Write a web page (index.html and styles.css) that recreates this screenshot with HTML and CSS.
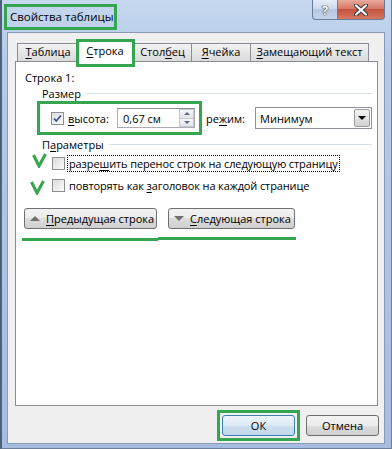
FILE: index.html
```html
<!DOCTYPE html>
<html lang="ru">
<head>
    <meta charset="UTF-8">
    <meta name="viewport" content="width=device-width, initial-scale=1.0">
    <title>Свойства таблицы</title>
    <link rel="stylesheet" href="styles.css">
</head>
<body>

<div class="window">
    <div class="titlebar">
        <span class="title">Свойства таблицы</span>
        <div class="caption-buttons">
            <div class="cap-help">?</div>
            <div class="cap-close">
                <svg width="14" height="12" viewBox="0 0 14 12">
                    <path d="M2 1.5 L12 10.5 M12 1.5 L2 10.5" stroke="#3b3b3b" stroke-width="4.2" stroke-linecap="round"/>
                    <path d="M2 1.5 L12 10.5 M12 1.5 L2 10.5" stroke="#fff" stroke-width="2.2" stroke-linecap="round"/>
                </svg>
            </div>
        </div>
    </div>

    <div class="client">
        <div class="tabs">
            <div class="tab tab-table"><u>Т</u>аблица</div>
            <div class="tab tab-row active"><u>С</u>трока</div>
            <div class="tab tab-col">Стол<u>б</u>ец</div>
            <div class="tab tab-cell"><u>Я</u>чейка</div>
            <div class="tab tab-alt"><u>З</u>амещающий текст</div>
        </div>

        <div class="panel">
            <div class="row-title">Строка 1:</div>
            <div class="group-head">Размер</div>

            <div class="size-row">
                <div class="hl">
                    <span class="check">
                        <svg width="11" height="11" viewBox="0 0 11 11">
                            <path d="M2 5.5 L4.3 8 L9 2.5" fill="none" stroke="#3a4f8c" stroke-width="1.7"/>
                        </svg>
                    </span>
                    <span class="lbl"><u>в</u>ысота:</span>
                    <div class="spin">
                        <span class="spin-value">0,67 см</span>
                        <div class="spin-btns">
                            <span class="spin-btn"><i class="tri-up-s"></i></span>
                            <span class="spin-btn"><i class="tri-down-s"></i></span>
                        </div>
                    </div>
                </div>
                <span class="lbl mode">ре<u>ж</u>им:</span>
                <div class="select">
                    <span>Минимум</span>
                    <span class="drop"><i class="tri-down-b"></i></span>
                </div>
            </div>

            <div class="group-head params">П<u>а</u>раметры</div>

            <div class="opt opt-first">
                <svg class="mark mark-a" width="15" height="15" viewBox="0 0 15 15">
                    <path d="M1.5 2 L7 13 L13.5 1" fill="none" stroke="#35a550" stroke-width="3"/>
                </svg>
                <span class="check"></span>
                <span class="opt-text focus">разре<u>ш</u>ить перенос строк на следующую страницу</span>
            </div>
            <div class="opt opt-second">
                <svg class="mark mark-b" width="15" height="15" viewBox="0 0 15 15">
                    <path d="M1.5 2 L7 13 L13.5 1" fill="none" stroke="#35a550" stroke-width="3"/>
                </svg>
                <span class="check"></span>
                <span class="opt-text">повторять как <u>з</u>аголовок на каждой странице</span>
            </div>

            <div class="nav">
                <div class="btn nav-btn nav-prev"><i class="tri-up"></i><span><u>П</u>редыдущая строка</span></div>
                <div class="btn nav-btn nav-next"><i class="tri-down"></i><span><u>С</u>ледующая строка</span></div>
            </div>
            <div class="underline">
                <span class="seg seg-left"></span>
                <span class="seg seg-right"></span>
            </div>
        </div>

        <div class="footer">
            <div class="ok-mark">
                <div class="btn ok">ОК</div>
            </div>
            <div class="btn">Отмена</div>
        </div>
    </div>
</div>

</body>
</html>
```

FILE: styles.css
```css
body {
    margin: 0;
    font-family: "Open Sans", "Noto Sans", sans-serif;
    font-size: 11px;
    color: #000;
}
u {
    text-decoration: underline;
    text-underline-offset: 2px;
}

/* window frame */
.window {
    width: 392px;
    height: 449px;
    box-sizing: border-box;
    border-left: 2px solid #4f6079;
    border-right: 1px solid #6d7f99;
    border-bottom: 1px solid #6d7f99;
    background: linear-gradient(#c6d8ef, #b5cae8 60px, #a6bde1);
    display: flex;
    flex-direction: column;
}
.titlebar {
    height: 32px;
    flex-shrink: 0;
    display: flex;
    align-items: flex-start;
}
.title {
    margin: 7px 0 0 5px;
    width: 104px;
    height: 20px;
    line-height: 20px;
    padding-left: 3px;
    font-size: 11.5px;
    white-space: nowrap;
    outline: 3px solid #35a550;
}
.caption-buttons {
    margin-left: auto;
    margin-right: 6px;
    display: flex;
}
.cap-help, .cap-close {
    height: 20px;
    box-sizing: border-box;
    border: 1px solid #6a7b96;
    border-top: none;
    display: flex;
    align-items: center;
    justify-content: center;
}
.cap-help {
    width: 26px;
    border-radius: 0 0 0 4px;
    background: linear-gradient(#e4ecf7, #c9d7ec 50%, #b4c6e1 50%, #c6d6ec);
    color: #fff;
    font-weight: bold;
    font-size: 13px;
    text-shadow: 0 0 1px #333, 0 0 1px #333, 0 0 1px #333;
}
.cap-close {
    width: 47px;
    border-left: none;
    border-radius: 0 0 4px 0;
    background: linear-gradient(#e9aa9c, #d7796a 45%, #c4503e 50%, #d77a63);
}

/* client area */
.client {
    flex: 1;
    margin: 0 6px 4px 5px;
    background: #f0f0f0;
    border: 1px solid #8799b4;
    padding: 8px 6px 0 7px;
    display: flex;
    flex-direction: column;
}
.tabs {
    height: 20px;
    display: flex;
    align-items: flex-end;
    padding-left: 2px;
    position: relative;
    z-index: 1;
}
.tab {
    height: 18px;
    box-sizing: border-box;
    border: 1px solid #898c95;
    border-bottom: none;
    margin-right: -1px;
    background: linear-gradient(#f3f3f3, #e6e6e6 50%, #dadada);
    line-height: 16px;
    text-align: center;
    flex-shrink: 0;
}
.tab-table { width: 62px; }
.tab-row { width: 58px; }
.tab-col { width: 59px; }
.tab-cell { width: 60px; }
.tab-alt { width: 119px; }
.tab.active {
    position: relative;
    height: 21px;
    margin: 0 -1px -1px -2px;
    background: #fff;
    line-height: 18px;
    z-index: 2;
}
.tab.active::after {
    content: "";
    position: absolute;
    left: -1px;
    right: -2px;
    top: -3px;
    bottom: -5px;
    border: 3px solid #35a550;
}

.panel {
    height: 345px;
    box-sizing: border-box;
    background: #fff;
    border: 1px solid #898c95;
    padding: 8px 5px 0 9px;
}
.row-title {
    line-height: 16px;
}
.group-head {
    display: flex;
    align-items: center;
    line-height: 15px;
    margin-left: 17px;
}
.group-head::after {
    content: "";
    flex: 1;
    border-top: 1px solid #d5dfe5;
    margin-left: 5px;
}
.group-head.params {
    margin-top: 2px;
}

.size-row {
    display: flex;
    align-items: center;
    margin-left: 12px;
}
.hl {
    width: 165px;
    height: 34px;
    box-sizing: border-box;
    border: 3px solid #35a550;
    padding: 0 4px 0 11px;
    display: flex;
    align-items: center;
}
.check {
    width: 13px;
    height: 13px;
    box-sizing: border-box;
    border: 1px solid #8e8f8f;
    background: linear-gradient(135deg, #dcdcdc, #fbfbfb);
    flex-shrink: 0;
    display: flex;
    align-items: center;
    justify-content: center;
}
.lbl {
    margin-left: 4px;
}
.spin {
    margin-left: auto;
    width: 78px;
    height: 20px;
    box-sizing: border-box;
    border: 1px solid #abadb3;
    border-top-color: #8e9299;
    display: flex;
    align-items: center;
}
.spin-value {
    flex: 1;
    padding-left: 5px;
}
.spin-btns {
    width: 15px;
    height: 18px;
    display: flex;
    flex-direction: column;
}
.spin-btn {
    flex: 1;
    border: 1px solid #c3c7ce;
    margin-top: -1px;
    background: linear-gradient(#f5f6f8, #e1e4ea);
    display: flex;
    align-items: center;
    justify-content: center;
}
.spin-btn:first-child {
    margin-top: 0;
}
.tri-up-s {
    border-left: 3px solid transparent;
    border-right: 3px solid transparent;
    border-bottom: 3px solid #5c6b86;
}
.tri-down-s {
    border-left: 3px solid transparent;
    border-right: 3px solid transparent;
    border-top: 3px solid #5c6b86;
}

.select {
    margin-left: auto;
    width: 117px;
    height: 22px;
    box-sizing: border-box;
    border: 1px solid #8f929a;
    padding-left: 4px;
    display: flex;
    align-items: center;
}
.drop {
    margin-left: auto;
    margin-right: 1px;
    width: 16px;
    height: 18px;
    box-sizing: border-box;
    border: 1px solid #9c9c9c;
    border-radius: 2px;
    background: linear-gradient(#f4f4f4, #e4e4e4 50%, #d2d2d2);
    display: flex;
    align-items: center;
    justify-content: center;
}
.tri-down-b {
    border-left: 4px solid transparent;
    border-right: 4px solid transparent;
    border-top: 4px solid #000;
}

/* options */
.opt {
    height: 18px;
    display: flex;
    align-items: center;
}
.opt-first {
    margin-top: 2px;
}
.opt-second {
    margin-top: 4px;
}
.mark {
    align-self: flex-start;
    flex-shrink: 0;
}
.mark-a {
    margin: -1px 5px 0 7px;
}
.mark-b {
    margin: 4px 7px 0 5px;
}
.opt-text {
    margin-left: 2px;
    padding: 0 1px;
    line-height: 15px;
    letter-spacing: -0.12px;
    border: 1px dotted transparent;
    white-space: nowrap;
}
.opt-text.focus {
    border-color: #000;
}

/* buttons */
.btn {
    height: 21px;
    box-sizing: border-box;
    border: 1px solid #707070;
    border-radius: 3px;
    background: linear-gradient(#f2f2f2, #ebebeb 50%, #dddddd 50%, #cfcfcf);
    display: flex;
    align-items: center;
    justify-content: center;
    width: 73px;
}
.nav {
    display: flex;
    gap: 11px;
    margin: 14px 0 0 -1px;
}
.nav-btn {
    justify-content: flex-start;
    padding-left: 5px;
    gap: 6px;
}
.nav-prev { width: 133px; }
.nav-next { width: 127px; }
.tri-up {
    border-left: 5px solid transparent;
    border-right: 5px solid transparent;
    border-bottom: 5px solid #707070;
}
.tri-down {
    border-left: 5px solid transparent;
    border-right: 5px solid transparent;
    border-top: 5px solid #707070;
}
.underline {
    display: flex;
    align-items: flex-start;
    margin: 8px 0 0 -3px;
}
.seg {
    height: 3px;
    background: #35a550;
}
.seg-left {
    width: 136px;
    margin-top: 1px;
}
.seg-right {
    width: 138px;
}

.footer {
    display: flex;
    justify-content: flex-end;
    align-items: center;
    gap: 6px;
    padding-top: 4px;
    margin-right: -1px;
}
.ok-mark {
    border: 3px solid #35a550;
    padding: 2px;
}
.ok {
    border-color: #3c7fb1;
    background: linear-gradient(#edf4fa, #dde9f4 50%, #cddff0 50%, #c3d8ec);
}
```
